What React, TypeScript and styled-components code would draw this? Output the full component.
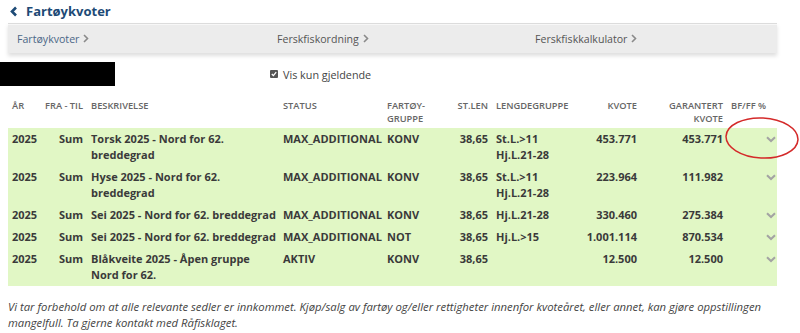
import styled, { createGlobalStyle } from 'styled-components'

const GlobalStyle = createGlobalStyle`
  body {
    margin: 0;
    background: #fff;
    font-family: "Open Sans", "Liberation Sans", sans-serif;
  }
`

type Quota = {
  year: string
  period: string
  desc: string
  status: string
  group: string
  len: string
  lengthGroup: string
  quota: string
  guaranteed: string
}

const rows: Quota[] = [
  { year: '2025', period: 'Sum', desc: 'Torsk 2025 - Nord for 62. breddegrad', status: 'MAX_ADDITIONAL', group: 'KONV', len: '38,65', lengthGroup: 'St.L.>11 Hj.L.21-28', quota: '453.771', guaranteed: '453.771' },
  { year: '2025', period: 'Sum', desc: 'Hyse 2025 - Nord for 62. breddegrad', status: 'MAX_ADDITIONAL', group: 'KONV', len: '38,65', lengthGroup: 'St.L.>11 Hj.L.21-28', quota: '223.964', guaranteed: '111.982' },
  { year: '2025', period: 'Sum', desc: 'Sei 2025 - Nord for 62. breddegrad', status: 'MAX_ADDITIONAL', group: 'KONV', len: '38,65', lengthGroup: 'Hj.L.21-28', quota: '330.460', guaranteed: '275.384' },
  { year: '2025', period: 'Sum', desc: 'Sei 2025 - Nord for 62. breddegrad', status: 'MAX_ADDITIONAL', group: 'NOT', len: '38,65', lengthGroup: 'Hj.L.>15', quota: '1.001.114', guaranteed: '870.534' },
  { year: '2025', period: 'Sum', desc: 'Blåkveite 2025 - Åpen gruppe Nord for 62.', status: 'AKTIV', group: 'KONV', len: '38,65', lengthGroup: '', quota: '12.500', guaranteed: '12.500' },
]

const ChevronRight = () => (
  <svg width="6" height="9" viewBox="0 0 6 9">
    <path d="M1 1 L4.5 4.5 L1 8" fill="none" stroke="currentColor" strokeWidth="1.6" />
  </svg>
)

const ChevronDown = () => (
  <svg width="10" height="7" viewBox="0 0 10 7">
    <path d="M1 1.2 L5 5 L9 1.2" fill="none" stroke="#a3a3a3" strokeWidth="2" />
  </svg>
)

const App = () => {
  return (
    <Page>
      <GlobalStyle />
      <Title>
        <svg width="8" height="11" viewBox="0 0 8 11">
          <path d="M6 1.5 L2 5.5 L6 9.5" fill="none" stroke="#1d4a76" strokeWidth="2.6" />
        </svg>
        Fartøykvoter
      </Title>

      <NavBar>
        <NavItem $active>Fartøykvoter <ChevronRight /></NavItem>
        <NavItem>Ferskfiskordning <ChevronRight /></NavItem>
        <NavItem>Ferskfiskkalkulator <ChevronRight /></NavItem>
      </NavBar>

      <FilterRow>
        <Redacted />
        <CheckLabel>
          <CheckBox>
            <svg width="6" height="6" viewBox="0 0 6 6">
              <path d="M0.8 3 L2.4 4.6 L5.2 1.2" fill="none" stroke="#fff" strokeWidth="1.3" />
            </svg>
          </CheckBox>
          Vis kun gjeldende
        </CheckLabel>
      </FilterRow>

      <HeadRow>
        <HeadCell>ÅR</HeadCell>
        <HeadCell>FRA - TIL</HeadCell>
        <HeadCell>BESKRIVELSE</HeadCell>
        <HeadCell>STATUS</HeadCell>
        <HeadCell>FARTØY-<br />GRUPPE</HeadCell>
        <HeadCell $right>ST.LEN</HeadCell>
        <HeadCell>LENGDEGRUPPE</HeadCell>
        <HeadCell $right>KVOTE</HeadCell>
        <HeadCell $right>GARANTERT<br />KVOTE</HeadCell>
        <HeadCell>BF/FF %</HeadCell>
      </HeadRow>

      <Body>
        {rows.map((r, i) => (
          <BodyRow key={i}>
            <Cell>{r.year}</Cell>
            <Cell $right>{r.period}</Cell>
            <Cell>{r.desc}</Cell>
            <Cell>{r.status}</Cell>
            <Cell>{r.group}</Cell>
            <Cell $right>{r.len}</Cell>
            <Cell>{r.lengthGroup}</Cell>
            <Cell $right>{r.quota}</Cell>
            <Cell $right>{r.guaranteed}</Cell>
            <ToggleCell><ChevronDown /></ToggleCell>
          </BodyRow>
        ))}
      </Body>

      <Note>
        Vi tar forbehold om at alle relevante sedler er innkommet. Kjøp/salg av fartøy og/eller rettigheter innenfor kvoteåret, eller annet, kan gjøre oppstillingen mangelfull. Ta gjerne kontakt med Råfisklaget.
      </Note>

      <Marker width="76" height="44" viewBox="0 0 76 44">
        <ellipse cx="38" cy="22" rx="36" ry="20" fill="none" stroke="#d42a2a" strokeWidth="1.5" transform="rotate(3 38 22)" />
      </Marker>
    </Page>
  )
}

export default App

const COLUMNS = '33px 46px 192px 104px 70px 39px 78px 71px 86px 50px'

const Page = styled.div`
position: relative;
width: 769px;
padding: 0 23px 0 8px;
color: #333;
`

const Title = styled.div`
display: flex;
align-items: center;
gap: 8px;
height: 22px;
padding-left: 2px;
color: #1d4a76;
font-size: 13px;
font-weight: 700;
`

const NavBar = styled.div`
display: grid;
grid-template-columns: 260px 258px 1fr;
align-items: center;
height: 29px;
margin-top: 1px;
background: #ececec;
border-top: 1px solid #dcdcdc;
box-shadow: inset 0 1px 0 #f7f7f7, 0 3px 4px rgba(0, 0, 0, 0.13);
`

const NavItem = styled.div<{ $active?: boolean }>`
display: flex;
align-items: center;
gap: 4px;
padding-left: 9px;
font-size: 10.6px;
color: ${p => (p.$active ? '#4b6787' : '#555')};

svg {
  color: #8a8a8a;
}
`

const FilterRow = styled.div`
display: flex;
align-items: center;
height: 24px;
margin-top: 9px;
`

const Redacted = styled.div`
width: 115px;
height: 24px;
margin-left: -8px;
background: #000;
`

const CheckLabel = styled.label`
display: flex;
align-items: center;
gap: 5px;
margin-left: 155px;
font-size: 10.8px;
color: #444;
`

const CheckBox = styled.span`
display: flex;
align-items: center;
justify-content: center;
width: 8px;
height: 8px;
border-radius: 1px;
background: #555;
`

const HeadRow = styled.div`
display: grid;
grid-template-columns: ${COLUMNS};
margin-top: 11px;
padding: 2px 0 3px;
`

const HeadCell = styled.div<{ $right?: boolean }>`
padding: ${p => (p.$right ? '0 4px 0 0' : '0 0 0 4px')};
font-size: 9.3px;
font-weight: 600;
line-height: 13px;
color: #666;
text-align: ${p => (p.$right ? 'right' : 'left')};
`

const Body = styled.div`
background: #e1f7c5;
`

const BodyRow = styled.div`
display: grid;
grid-template-columns: ${COLUMNS};
padding: 3px 0;
`

const Cell = styled.div<{ $right?: boolean }>`
padding: ${p => (p.$right ? '0 4px 0 0' : '0 0 0 4px')};
font-size: 11px;
font-weight: 700;
line-height: 16px;
color: #3a3a3a;
text-align: ${p => (p.$right ? 'right' : 'left')};
`

const ToggleCell = styled.div`
display: flex;
justify-content: flex-end;
align-items: center;
height: 16px;
padding-right: 1px;
`

const Note = styled.p`
margin: 13px 0 0;
font-size: 11.3px;
font-style: italic;
line-height: 16px;
color: #444;
`

const Marker = styled.svg`
position: absolute;
left: 724px;
top: 116px;
`
